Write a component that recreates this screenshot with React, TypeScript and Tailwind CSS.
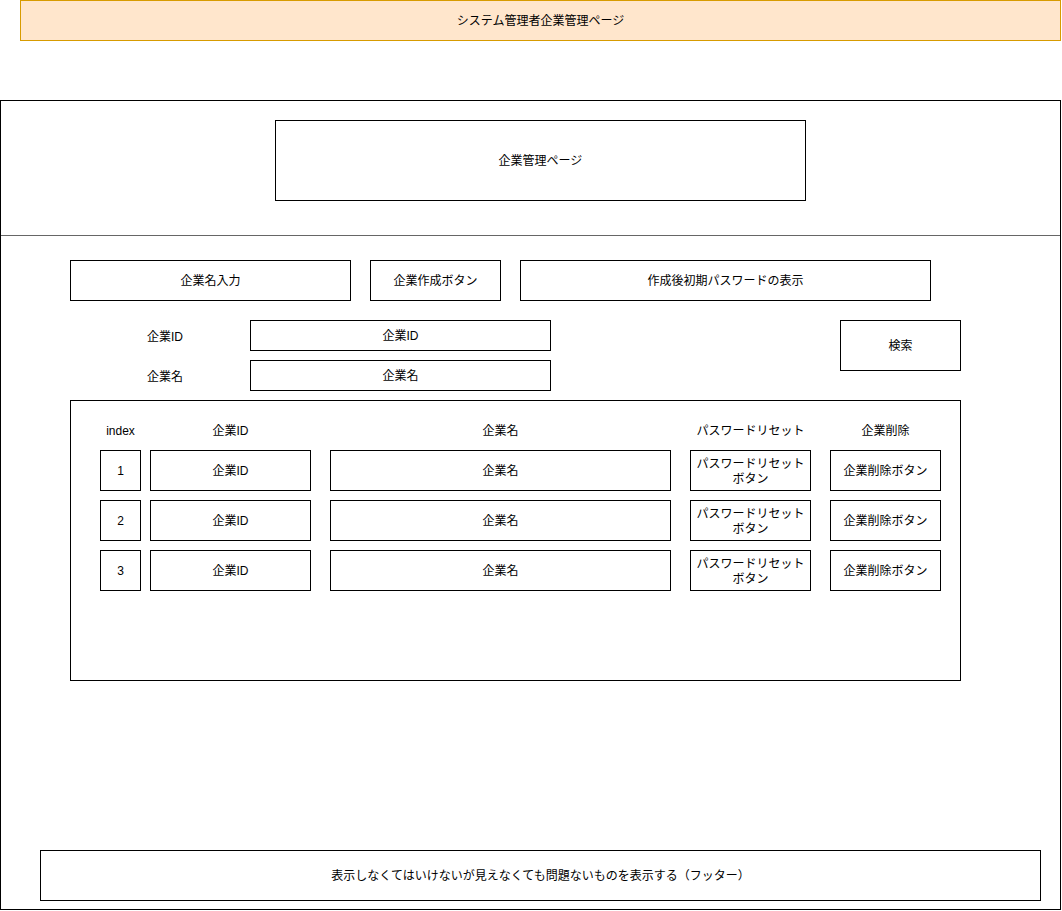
import React from 'react'

const FONT = 'font-["Liberation_Sans","Noto_Sans_CJK_JP",sans-serif]'

const ROWS = ['1', '2', '3']

function Box({ className = '', children }: { className?: string; children?: React.ReactNode }) {
  return (
    <div className={`border border-black bg-white pt-[2px] flex items-center justify-center text-center text-[12px] leading-[15px] shrink-0 ${className}`}>
      {children}
    </div>
  )
}

export default function App() {
  return (
    <div className={`w-[1062px] h-[911px] bg-white text-black ${FONT}`}>
      {/* banner */}
      <div className="ml-[20px] w-[1041px] h-[41px] bg-[#ffe6cc] border border-[#d79b00] flex items-center justify-center text-[12px]">
        システム管理者企業管理ページ
      </div>

      {/* page frame */}
      <div className="mt-[59px] w-[1061px] h-[810px] border border-black flex flex-col">
        <div className="h-[135px] border-b border-[#666] pt-[19px] pl-[274px] shrink-0">
          <Box className="w-[531px] h-[81px]">企業管理ページ</Box>
        </div>

        <div className="flex flex-col flex-1">
          {/* create row */}
          <div className="mt-[24px] pl-[69px] flex gap-[19px]">
            <Box className="w-[281px] h-[41px]">企業名入力</Box>
            <Box className="w-[131px] h-[41px]">企業作成ボタン</Box>
            <Box className="w-[411px] h-[41px]">作成後初期パスワードの表示</Box>
          </div>

          {/* search */}
          <div className="mt-[19px] pl-[129px] flex items-start">
            <div className="flex flex-col gap-[9px]">
              <div className="flex items-center">
                <div className="w-[70px] pt-[2px] text-center text-[12px]">企業ID</div>
                <Box className="ml-[50px] w-[301px] h-[31px]">企業ID</Box>
              </div>
              <div className="flex items-center">
                <div className="w-[70px] pt-[2px] text-center text-[12px]">企業名</div>
                <Box className="ml-[50px] w-[301px] h-[31px]">企業名</Box>
              </div>
            </div>
            <Box className="ml-[289px] w-[121px] h-[51px]">検索</Box>
          </div>

          {/* list */}
          <div className="mt-[9px] ml-[69px] w-[891px] h-[281px] border border-black pl-[29px]">
            <div className="mt-[19px] h-[20px] pt-[2px] flex items-center text-[12px] text-center">
              <div className="w-[41px]">index</div>
              <div className="ml-[9px] w-[161px]">企業ID</div>
              <div className="ml-[19px] w-[341px]">企業名</div>
              <div className="ml-[19px] w-[121px]">パスワードリセット</div>
              <div className="ml-[19px] w-[111px]">企業削除</div>
            </div>
            <div className="mt-[10px] flex flex-col gap-[9px]">
              {ROWS.map(n => (
                <div key={n} className="flex">
                  <Box className="w-[41px] h-[41px]">{n}</Box>
                  <Box className="ml-[9px] w-[161px] h-[41px]">企業ID</Box>
                  <Box className="ml-[19px] w-[341px] h-[41px]">企業名</Box>
                  <Box className="ml-[19px] w-[121px] h-[41px]">
                    <span>
                      パスワードリセット
                      <br />
                      ボタン
                    </span>
                  </Box>
                  <Box className="ml-[19px] w-[111px] h-[41px]">企業削除ボタン</Box>
                </div>
              ))}
            </div>
          </div>

          {/* footer */}
          <div className="mt-auto mb-[8px] ml-[39px]">
            <Box className="w-[1001px] h-[51px]">
              表示しなくてはいけないが見えなくても問題ないものを表示する（フッター）
            </Box>
          </div>
        </div>
      </div>
    </div>
  )
}
